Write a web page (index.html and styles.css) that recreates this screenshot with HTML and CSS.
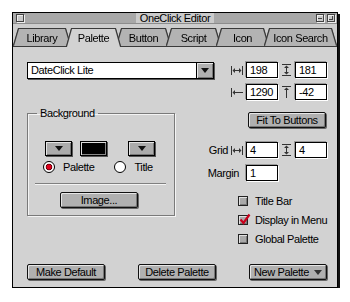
FILE: index.html
```html
<!DOCTYPE html>
<html lang="en">
<head>
  <meta charset="UTF-8">
  <title>OneClick Editor</title>
  <link rel="stylesheet" href="styles.css">
</head>
<body>

<div class="window">
  <div class="titlebar">
    <div class="tb-left"><span class="closebox"></span></div>
    <span class="title">OneClick Editor</span>
    <div class="tb-right"><span class="winbox collapse"></span><span class="winbox zoom"></span></div>
  </div>

  <div class="tabs">
    <div class="tab t-lib"><div class="tab-face">Library</div></div>
    <div class="tab t-pal active"><div class="tab-face">Palette</div></div>
    <div class="tab t-btn"><div class="tab-face">Button</div></div>
    <div class="tab t-scr"><div class="tab-face">Script</div></div>
    <div class="tab t-ico"><div class="tab-face">Icon</div></div>
    <div class="tab t-srch"><div class="tab-face">Icon Search</div></div>
  </div>

  <div class="panel">
    <div class="main">
      <div class="left">
        <div class="popup">
          <span class="popup-text">DateClick Lite</span>
          <span class="popup-arrow"><span class="tri"></span></span>
        </div>

        <fieldset class="group">
          <legend>Background</legend>
          <div class="group-body">
            <div class="swatches">
              <span class="arrowbtn"><span class="tri"></span></span>
              <span class="swatch"></span>
              <span class="arrowbtn right"><span class="tri"></span></span>
            </div>
            <div class="radio-row">
              <label class="radio-item"><span class="radio on"></span>Palette</label>
              <label class="radio-item"><span class="radio"></span>Title</label>
            </div>
            <div class="separator"></div>
            <div class="btn image-btn">Image...</div>
          </div>
        </fieldset>
      </div>

      <div class="right">
        <div class="frow">
          <svg class="ico" width="12" height="11" viewBox="0 0 12 11"><path d="M0.5 1v9M11.5 1v9M3 5.5h6" stroke="#333" fill="none"/><path d="M1.5 5.5l2.5-2.5v5zM10.5 5.5l-2.5-2.5v5z" fill="#333"/></svg>
          <span class="field">198</span>
          <svg class="ico" width="11" height="12" viewBox="0 0 11 12"><path d="M1 0.5h9M1 11.5h9M5.5 3v6" stroke="#333" fill="none"/><path d="M5.5 1.5l-2.5 2.5h5zM5.5 10.5l-2.5-2.5h5z" fill="#333"/></svg>
          <span class="field">181</span>
        </div>
        <div class="frow r2">
          <svg class="ico" width="12" height="11" viewBox="0 0 12 11"><path d="M0.5 1v9M3 5.5h9" stroke="#333" fill="none"/><path d="M1.5 5.5l2.5-2.5v5z" fill="#333"/></svg>
          <span class="field">1290</span>
          <svg class="ico" width="11" height="12" viewBox="0 0 11 12"><path d="M1 0.5h9M5.5 3v9" stroke="#333" fill="none"/><path d="M5.5 1.5l-2.5 2.5h5z" fill="#333"/></svg>
          <span class="field">-42</span>
        </div>
        <div class="fit-row">
          <div class="btn fit-btn">Fit To Buttons</div>
        </div>
        <div class="frow grid-row">
          <span class="flabel">Grid</span>
          <svg class="ico" width="12" height="11" viewBox="0 0 12 11"><path d="M0.5 1v9M11.5 1v9M3 5.5h6" stroke="#333" fill="none"/><path d="M1.5 5.5l2.5-2.5v5zM10.5 5.5l-2.5-2.5v5z" fill="#333"/></svg>
          <span class="field">4</span>
          <svg class="ico" width="11" height="12" viewBox="0 0 11 12"><path d="M1 0.5h9M1 11.5h9M5.5 3v6" stroke="#333" fill="none"/><path d="M5.5 1.5l-2.5 2.5h5zM5.5 10.5l-2.5-2.5h5z" fill="#333"/></svg>
          <span class="field">4</span>
        </div>
        <div class="frow margin-row">
          <span class="flabel">Margin</span>
          <span class="field">1</span>
        </div>

        <div class="checks">
          <label class="check-row"><span class="checkbox"></span>Title Bar</label>
          <label class="check-row"><span class="checkbox">
            <svg class="checkmark" width="13" height="12" viewBox="0 0 13 12"><path d="M2.5 6.5l3 3.5L11.5 1.5" stroke="#c8001c" stroke-width="2.2" fill="none"/></svg>
          </span>Display in Menu</label>
          <label class="check-row"><span class="checkbox"></span>Global Palette</label>
        </div>
      </div>
    </div>

    <div class="bottom">
      <div class="btn">Make Default</div>
      <div class="btn">Delete Palette</div>
      <div class="btn new-btn">New Palette <span class="tri"></span></div>
    </div>
  </div>
</div>

</body>
</html>
```
FILE: styles.css
```css
body {
  margin: 0;
  background: #fff;
  font-family: 'Liberation Sans', Arial, sans-serif;
  font-size: 11px;
  letter-spacing: -0.4px;
  color: #000;
  white-space: nowrap;
}

.window {
  margin: 12px 0 0 12px;
  width: 324px;
  height: 274px;
  border: 1px solid #000;
  box-shadow: 2px 2px 0 #111;
  background: #cdcdcd;
  display: flex;
  flex-direction: column;
}

/* title bar */
.titlebar {
  height: 10px;
  background: #a8a8a8;
  border-bottom: 1px solid #8c8c8c;
  display: grid;
  grid-template-columns: 1fr auto 1fr;
  align-items: center;
}

.tb-left {
  padding-left: 3px;
  display: flex;
}

.tb-right {
  display: flex;
  justify-content: flex-end;
  gap: 3px;
  padding-right: 2px;
}

.closebox,
.winbox {
  width: 6px;
  height: 6px;
  border: 1px solid #444;
  background: #c8c8c8;
  box-shadow: inset 1px 1px 0 #eee, 1px 1px 0 #eee;
}

.collapse {
  background: linear-gradient(#444, #444) center 3px / 4px 1px no-repeat, #c8c8c8;
}

.zoom {
  background: linear-gradient(#444, #444) 4px 0 / 1px 5px no-repeat, linear-gradient(#444, #444) 0 4px / 5px 1px no-repeat, #c8c8c8;
}

.title {
  background: #cbcbcb;
  padding: 0 4px;
  line-height: 10px;
  height: 10px;
}

/* tabs */
.tabs {
  display: flex;
  padding: 5px 0 0 1px;
  height: 17px;
}

.tab {
  filter: drop-shadow(1px 0 0 #3a3a3a) drop-shadow(-1px 0 0 #3a3a3a) drop-shadow(0 -1px 0 #3a3a3a);
  margin-left: -3px;
}

.tab:first-child {
  margin-left: 0;
}

.tab-face {
  height: 17px;
  line-height: 18px;
  text-align: center;
  background: #b3b3b3;
  clip-path: polygon(5px 0, calc(100% - 5px) 0, 100% 100%, 0 100%);
}

.tab.active {
  z-index: 1;
}

.tab.active .tab-face {
  background: #d2d2d2;
  height: 18px;
}

.t-lib { width: 56px; }
.t-pal { width: 53px; }
.t-btn { width: 53px; }
.t-scr { width: 53px; }
.t-ico { width: 51px; }
.t-srch { width: 71px; }

/* panel */
.panel {
  flex: 1;
  background: #d2d2d2;
  border-top: 1px solid #3a3a3a;
  padding: 15px 10px 7px 14px;
  display: flex;
  flex-direction: column;
}

.main {
  display: flex;
  justify-content: space-between;
}

.left {
  width: 176px;
}

.right {
  width: 123px;
}

.tri {
  display: inline-block;
  width: 0;
  height: 0;
  border-left: 4px solid transparent;
  border-right: 4px solid transparent;
  border-top: 5px solid #111;
}

.popup {
  width: 187px;
  height: 17px;
  box-sizing: border-box;
  border: 1px solid #000;
  background: #fff;
  display: flex;
  box-shadow: 1px 1px 0 #555;
}

.popup-text {
  flex: 1;
  padding-left: 3px;
  line-height: 15px;
}

.popup-arrow {
  width: 16px;
  background: #b0b0b0;
  border-left: 1px solid #000;
  box-shadow: inset 1px 1px 0 #e8e8e8, inset -1px -1px 0 #777;
  display: flex;
  align-items: center;
  justify-content: center;
}

/* background group */
.group {
  margin: 28px 0 0 0;
  padding: 0 0 7px 0;
  width: 148px;
  box-sizing: border-box;
  border: 1px solid #7a7a7a;
  box-shadow: inset 1px 1px 0 #f4f4f4, 1px 1px 0 #f4f4f4;
}

.group legend {
  margin-left: 9px;
  padding: 0 3px;
  line-height: 12px;
}

.group-body {
  padding: 22px 0 0 17px;
}

.swatches {
  display: flex;
  gap: 8px;
}

.arrowbtn,
.swatch {
  width: 27px;
  height: 15px;
  box-sizing: border-box;
  border: 1px solid #000;
  box-shadow: inset 1px 1px 0 #e4e4e4, inset -1px -1px 0 #777, 1px 1px 0 #555;
}

.arrowbtn {
  background: #ababab;
  display: flex;
  align-items: center;
  justify-content: center;
}

.arrowbtn.right {
  margin-left: 13px;
}

.swatch {
  background: #000;
  box-shadow: inset 1px 1px 0 #ddd, inset -1px -1px 0 #888, 1px 1px 0 #555;
}

.radio-row {
  display: flex;
  gap: 20px;
  margin: 5px 0 0 -2px;
  height: 12px;
}

.radio-item {
  display: flex;
  align-items: center;
  gap: 8px;
}

.radio {
  width: 12px;
  height: 12px;
  box-sizing: border-box;
  border: 1px solid #000;
  border-radius: 50%;
  background: #fff;
}

.radio.on {
  background: radial-gradient(circle, #e0001c 0 2.2px, #5a0008 2.8px 3.2px, #fff 3.6px);
}

.separator {
  margin: 10px 0 0 -10px;
  width: 131px;
  border-top: 1px solid #808080;
  border-bottom: 1px solid #f4f4f4;
}

/* buttons */
.btn {
  height: 16px;
  width: 78px;
  box-sizing: border-box;
  border: 1px solid #111;
  border-radius: 2px;
  background: #b0b0b0;
  box-shadow: inset 1px 1px 0 #e6e6e6, inset -1px -1px 0 #777, 1px 1px 0 #666;
  text-align: center;
  line-height: 14px;
}

.image-btn {
  margin: 7px 0 0 15px;
}

.fit-row {
  display: flex;
  justify-content: flex-end;
  margin-top: 12px;
  padding-right: 1px;
}

/* number fields */
.frow {
  display: flex;
  justify-content: flex-end;
  align-items: center;
  gap: 3px;
  height: 16px;
}

.frow.r2 {
  margin-top: 6px;
}

.grid-row {
  margin-top: 14px;
}

.margin-row {
  margin-top: 7px;
  padding-right: 49px;
}

.margin-row .flabel {
  margin-right: 4px;
}

.field {
  width: 32px;
  height: 16px;
  box-sizing: border-box;
  border: 1px solid #000;
  background: #fff;
  padding-left: 3px;
  line-height: 14px;
  box-shadow: -1px -1px 0 #999, 1px 1px 0 #fff;
}

/* checkboxes */
.checks {
  margin-top: 14px;
  display: flex;
  flex-direction: column;
  gap: 7px;
}

.check-row {
  display: flex;
  align-items: center;
  gap: 7px;
  height: 12px;
  margin-left: 34px;
}

.checkbox {
  position: relative;
  flex: none;
  width: 10px;
  height: 10px;
  box-sizing: border-box;
  border: 1px solid #222;
  background: #a9a9a9;
  box-shadow: inset 1px 1px 0 #e0e0e0, inset -1px -1px 0 #777;
}

.checkmark {
  position: absolute;
  left: -1px;
  top: -3px;
}

/* bottom buttons */
.bottom {
  margin-top: auto;
  display: flex;
  justify-content: space-between;
}

.new-btn {
  display: flex;
  align-items: center;
  justify-content: center;
  gap: 5px;
}

.new-btn .tri {
  border-top-color: #333;
}
```
